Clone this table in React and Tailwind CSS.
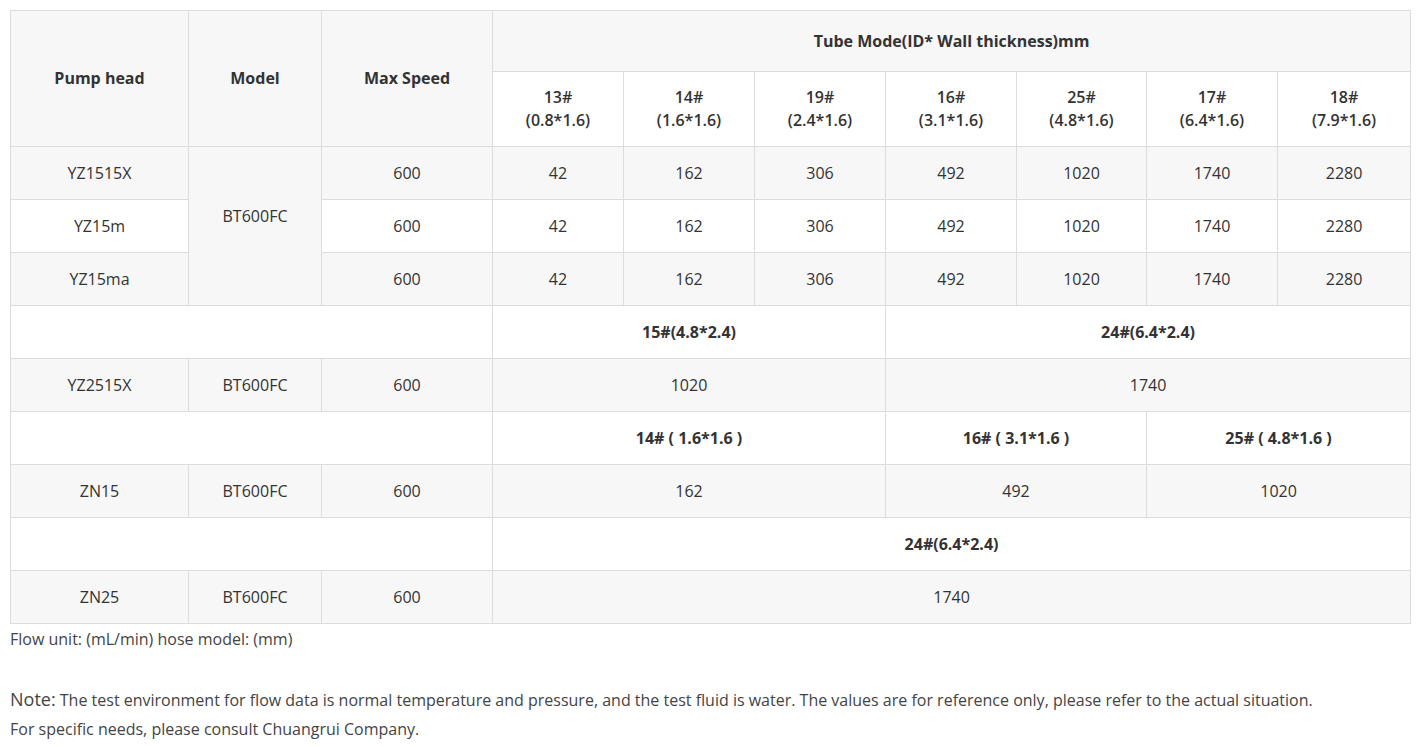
const TUBES = [
  ["13#", "(0.8*1.6)"],
  ["14#", "(1.6*1.6)"],
  ["19#", "(2.4*1.6)"],
  ["16#", "(3.1*1.6)"],
  ["25#", "(4.8*1.6)"],
  ["17#", "(6.4*1.6)"],
  ["18#", "(7.9*1.6)"],
];

const FLOWS = ["42", "162", "306", "492", "1020", "1740", "2280"];

const td = "border border-[#dcdcdc] text-center align-middle";

export default function App() {
  return (
    <div className="bg-white min-h-[747px] px-[10px] pt-[10px] text-[#333] font-['Open_Sans',sans-serif]">
      <table className="w-[1400px] table-fixed border-collapse text-[16px] [&_tr:nth-child(odd)]:bg-[#f7f7f7] [&_tr:nth-child(even)]:bg-white">
        <colgroup>
          <col className="w-[178px]" />
          <col className="w-[133px]" />
          <col className="w-[171px]" />
          <col className="w-[131px]" />
          <col className="w-[131px]" />
          <col className="w-[131px]" />
          <col className="w-[131px]" />
          <col className="w-[130px]" />
          <col className="w-[131px]" />
          <col className="w-[133px]" />
        </colgroup>
        <tbody>
          <tr className="h-[61px]">
            <td rowSpan={2} className={`${td} font-bold pb-[2px]`}>Pump head</td>
            <td rowSpan={2} className={`${td} font-bold pb-[2px]`}>Model</td>
            <td rowSpan={2} className={`${td} font-bold pb-[2px]`}>Max Speed</td>
            <td colSpan={7} className={`${td} font-bold`}>Tube Mode(ID* Wall thickness)mm</td>
          </tr>
          <tr className="h-[75px]">
            {TUBES.map(([n, d]) => (
              <td key={n} className={`${td} font-semibold leading-[23px]`}>
                {n}
                <br />
                {d}
              </td>
            ))}
          </tr>
          {["YZ1515X", "YZ15m", "YZ15ma"].map((head, i) => (
            <tr key={head} className="h-[53px]">
              <td className={td}>{head}</td>
              {i === 0 && (
                <td rowSpan={3} className={`${td} pb-[20px]`}>
                  BT600FC
                </td>
              )}
              <td className={td}>600</td>
              {FLOWS.map((f, j) => (
                <td key={j} className={td}>{f}</td>
              ))}
            </tr>
          ))}
          <tr className="h-[53px]">
            <td colSpan={3} className={td}></td>
            <td colSpan={3} className={`${td} font-bold`}>15#(4.8*2.4)</td>
            <td colSpan={4} className={`${td} font-bold`}>24#(6.4*2.4)</td>
          </tr>
          <tr className="h-[53px]">
            <td className={td}>YZ2515X</td>
            <td className={td}>BT600FC</td>
            <td className={td}>600</td>
            <td colSpan={3} className={td}>1020</td>
            <td colSpan={4} className={td}>1740</td>
          </tr>
          <tr className="h-[53px]">
            <td colSpan={3} className={td}></td>
            <td colSpan={3} className={`${td} font-bold`}>14# ( 1.6*1.6 )</td>
            <td colSpan={2} className={`${td} font-bold`}>16# ( 3.1*1.6 )</td>
            <td colSpan={2} className={`${td} font-bold`}>25# ( 4.8*1.6 )</td>
          </tr>
          <tr className="h-[53px]">
            <td className={td}>ZN15</td>
            <td className={td}>BT600FC</td>
            <td className={td}>600</td>
            <td colSpan={3} className={td}>162</td>
            <td colSpan={2} className={td}>492</td>
            <td colSpan={2} className={td}>1020</td>
          </tr>
          <tr className="h-[53px]">
            <td colSpan={3} className={td}></td>
            <td colSpan={7} className={`${td} font-bold`}>24#(6.4*2.4)</td>
          </tr>
          <tr className="h-[53px]">
            <td className={td}>ZN25</td>
            <td className={td}>BT600FC</td>
            <td className={td}>600</td>
            <td colSpan={7} className={td}>1740</td>
          </tr>
        </tbody>
      </table>
      <p className="text-[16px] leading-[29px] text-[#444] mt-[1px]">Flow unit: (mL/min) hose model: (mm)</p>
      <div className="mt-[31px] text-[16px] leading-[29px] text-[#444]">
        <p>
          <span className="text-[18px]">Note:</span> The test environment for flow data is normal temperature and pressure, and the test fluid is water. The values are for reference only, please refer to the actual situation.
        </p>
        <p>For specific needs, please consult Chuangrui Company.</p>
      </div>
    </div>
  );
}
